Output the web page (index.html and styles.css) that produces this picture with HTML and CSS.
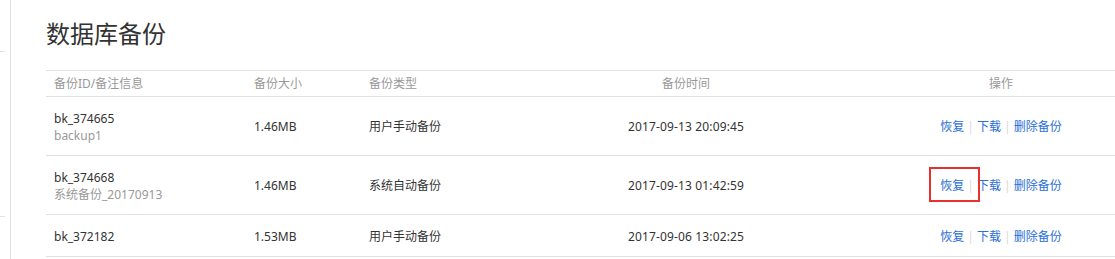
FILE: index.html
```html
<!DOCTYPE html>
<html lang="zh-CN">
<head>
<meta charset="utf-8">
<title>数据库备份</title>
<link rel="stylesheet" href="styles.css">
</head>
<body>
<div class="page">
  <aside class="sidebar">
    <div class="side-item side-item-1"></div>
    <div class="side-item side-item-2"></div>
  </aside>
  <main class="main">
    <h1 class="title">数据库备份</h1>
    <table class="backup-table">
      <colgroup>
        <col class="c-id">
        <col class="c-size">
        <col class="c-type">
        <col class="c-time">
        <col class="c-op">
      </colgroup>
      <thead>
        <tr>
          <th>备份ID/备注信息</th>
          <th>备份大小</th>
          <th>备份类型</th>
          <th class="center">备份时间</th>
          <th class="center op-col">操作</th>
        </tr>
      </thead>
      <tbody>
        <tr class="tall">
          <td><div class="bid">bk_374665</div><div class="note">backup1</div></td>
          <td>1.46MB</td>
          <td>用户手动备份</td>
          <td class="center time">2017-09-13 20:09:45</td>
          <td class="center op-col"><a class="op">恢复</a><span class="sep">|</span><a class="op">下载</a><span class="sep">|</span><a class="op">删除备份</a></td>
        </tr>
        <tr class="tall">
          <td><div class="bid">bk_374668</div><div class="note">系统备份_20170913</div></td>
          <td>1.46MB</td>
          <td>系统自动备份</td>
          <td class="center time">2017-09-13 01:42:59</td>
          <td class="center op-col"><a class="op marked">恢复</a><span class="sep">|</span><a class="op">下载</a><span class="sep">|</span><a class="op">删除备份</a></td>
        </tr>
        <tr class="short">
          <td><div class="bid">bk_372182</div></td>
          <td>1.53MB</td>
          <td>用户手动备份</td>
          <td class="center time">2017-09-06 13:02:25</td>
          <td class="center op-col"><a class="op">恢复</a><span class="sep">|</span><a class="op">下载</a><span class="sep">|</span><a class="op">删除备份</a></td>
        </tr>
      </tbody>
    </table>
  </main>
</div>
</body>
</html>
```
FILE: styles.css
```css
html, body {
  margin: 0;
  padding: 0;
  background: #ffffff;
}
body {
  font-family: "Noto Sans", "Noto Sans CJK SC", sans-serif;
  color: #333333;
  font-size: 12px;
  overflow: hidden;
}
.page {
  display: flex;
  min-height: 259px;
}
.sidebar {
  width: 11px;
  flex: none;
  border-right: 1px solid #e3e3e3;
  box-sizing: border-box;
  min-height: 259px;
}
.side-item {
  width: 5px;
  border-bottom: 1px solid #e3e3e3;
}
.side-item-1 { height: 51px; }
.side-item-2 { height: 164px; }
.main {
  flex: 1;
  padding-left: 35px;
  min-width: 0;
}
.title {
  margin: 0;
  padding-top: 17px;
  font-family: "Noto Sans CJK SC", sans-serif;
  font-size: 24px;
  line-height: 32px;
  font-weight: normal;
  color: #333333;
  height: 70px;
  box-sizing: border-box;
}
.backup-table {
  width: 1069px;
  border-collapse: collapse;
  table-layout: fixed;
}
.c-id { width: 200px; }
.c-size { width: 115px; }
.c-type { width: 110px; }
.c-time { width: 430px; }
.c-op { width: 214px; }
.backup-table th {
  height: 25px;
  padding: 0 8px;
  text-align: left;
  font-weight: normal;
  color: #999999;
  border-top: 1px solid #e0e0e0;
  border-bottom: 1px solid #e0e0e0;
  line-height: 17px;
  vertical-align: middle;
}
.backup-table td {
  padding: 1px 8px 0;
  border-bottom: 1px solid #e0e0e0;
  line-height: 17px;
  vertical-align: middle;
  color: #333333;
}
.backup-table .center {
  text-align: center;
}
.backup-table .op-col {
  padding-right: 22px;
}
.backup-table .time {
  letter-spacing: 0.15px;
}
.tall td { height: 57px; }
.short td { height: 40px; }
.note {
  color: #999999;
}
.op {
  color: #2a6fd6;
  cursor: pointer;
}
.sep {
  color: #d8d8d8;
  margin: 0 3px;
}
.marked {
  position: relative;
}
.marked::after {
  content: "";
  position: absolute;
  left: -11px;
  top: -10px;
  width: 51px;
  height: 35px;
  border: 2px solid #e8312f;
  box-sizing: border-box;
}
```
